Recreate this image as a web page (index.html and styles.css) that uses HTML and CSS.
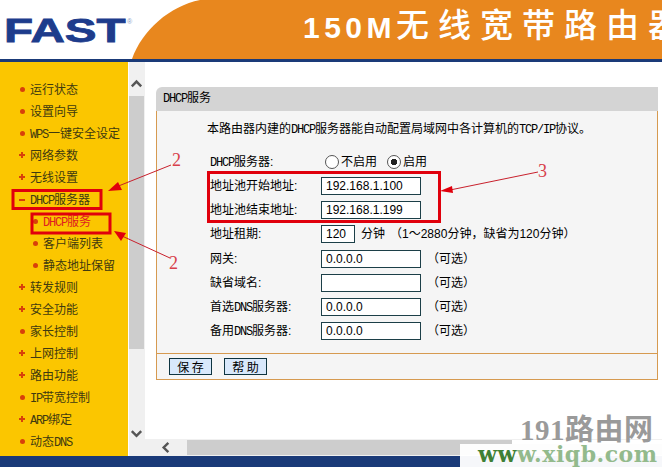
FILE: index.html
```html
<!DOCTYPE html>
<html lang="zh">
<head>
<meta charset="utf-8">
<title>DHCP服务</title>
<link rel="stylesheet" href="styles.css">
</head>
<body>
<div class="app">
  <header class="header">
    <div class="logo"><span class="logo-word">FAST</span><span class="logo-reg">®</span></div>
    <svg class="banner-shape" viewBox="0 0 530 59" preserveAspectRatio="none" aria-hidden="true"><path d="M0 59C10 30 38 6 68 0H530V59Z" fill="#e8871e"/></svg>
    <div class="banner-title"><span class="banner-latin">150M</span>无线宽带路由器</div>
  </header>
  <div class="main">
    <nav class="sidebar">
      <div class="item dot">运行状态</div>
      <div class="item dot">设置向导</div>
      <div class="item dot"><span class="lat">WPS</span>一键安全设定</div>
      <div class="item plus">网络参数</div>
      <div class="item plus">无线设置</div>
      <div class="item minus"><span class="lat">DHCP</span>服务器</div>
      <div class="item dot sub active"><span class="lat">DHCP</span>服务</div>
      <div class="item dot sub">客户端列表</div>
      <div class="item dot sub">静态地址保留</div>
      <div class="item plus">转发规则</div>
      <div class="item plus">安全功能</div>
      <div class="item dot">家长控制</div>
      <div class="item plus">上网控制</div>
      <div class="item plus">路由功能</div>
      <div class="item dot"><span class="lat">IP</span>带宽控制</div>
      <div class="item plus"><span class="lat">ARP</span>绑定</div>
      <div class="item dot">动态<span class="lat">DNS</span></div>
    </nav>
    <div class="vscroll">
      <svg class="arrow-v" viewBox="0 0 16 14" aria-hidden="true"><path d="M3 10.500 8 5.500l5 5" fill="none" stroke="#555" stroke-width="2.600"/></svg>
      <div class="vthumb"></div>
      <svg class="arrow-v arrow-end" viewBox="0 0 16 14" aria-hidden="true"><path d="M3 4 8 9l5-5" fill="none" stroke="#555" stroke-width="2.600"/></svg>
    </div>
    <div class="content">
      <div class="page">
        <section class="panel">
          <h1 class="panel-title"><span class="lat">DHCP</span>服务</h1>
          <div class="panel-body">
            <p class="desc">本路由器内建的<span class="lat">DHCP</span>服务器能自动配置局域网中各计算机的<span class="lat">TCP/IP</span>协议。</p>
            <div class="row">
              <label class="label"><span class="lat">DHCP</span>服务器:</label>
              <input class="radio" type="radio" name="dhcp"><span class="radio-text">不启用</span>
              <input class="radio" type="radio" name="dhcp" checked><span>启用</span>
            </div>
            <div class="row">
              <label class="label">地址池开始地址:</label>
              <input class="field" type="text" value="192.168.1.100">
            </div>
            <div class="row">
              <label class="label">地址池结束地址:</label>
              <input class="field" type="text" value="192.168.1.199">
            </div>
            <div class="row">
              <label class="label">地址租期:</label>
              <input class="field short" type="text" value="120">
              <span class="unit">分钟</span><span class="note">（1～2880分钟，缺省为120分钟）</span>
            </div>
            <div class="row row-gap">
              <label class="label">网关:</label>
              <input class="field" type="text" value="0.0.0.0"><span class="opt">（可选）</span>
            </div>
            <div class="row">
              <label class="label">缺省域名:</label>
              <input class="field" type="text" value=""><span class="opt">（可选）</span>
            </div>
            <div class="row">
              <label class="label">首选<span class="lat">DNS</span>服务器:</label>
              <input class="field" type="text" value="0.0.0.0"><span class="opt">（可选）</span>
            </div>
            <div class="row">
              <label class="label">备用<span class="lat">DNS</span>服务器:</label>
              <input class="field" type="text" value="0.0.0.0"><span class="opt">（可选）</span>
            </div>
          </div>
          <div class="panel-foot">
            <button class="btn" type="button">保 存</button>
            <button class="btn" type="button">帮 助</button>
          </div>
        </section>
      </div>
      <div class="hscroll">
        <svg class="arrow-h" viewBox="0 0 14 16" aria-hidden="true"><path d="M9.500 3 4.500 8l5 5" fill="none" stroke="#555" stroke-width="2.600"/></svg>
        <div class="hthumb"></div>
      </div>
    </div>
  </div>
  <div class="footbar"></div>
</div>

<svg class="notes" viewBox="0 0 662 467" aria-hidden="true">
  <g fill="none" stroke="#e0000c" stroke-width="3">
    <rect x="13" y="190.500" width="88" height="18"/>
    <rect x="32" y="214" width="78" height="19"/>
    <rect x="208.500" y="172.500" width="231" height="49"/>
  </g>
  <g stroke="#c8202c" stroke-width="1" fill="none">
    <path d="M171 165 116 187"/>
    <path d="M170 258 122 236"/>
    <path d="M538 172 450 190"/>
  </g>
  <g fill="#e0000c">
    <path d="M108 191 118 182 122 190Z"/>
    <path d="M114 231 126 233 121 241Z"/>
    <path d="M440 191 452 186 453 193Z"/>
  </g>
  <g class="note-num">
    <text x="172" y="166">2</text>
    <text x="169" y="269">2</text>
    <text x="538" y="177">3</text>
  </g>
</svg>

<div class="wm-site">191路由网</div>
<div class="wm-url"><span class="wm-dark">ww</span>w.xiqb.com</div>
</body>
</html>
```
FILE: styles.css
```css
* { box-sizing: border-box; }

html, body {
  margin: 0;
  padding: 0;
  overflow: hidden;
}

body {
  position: relative;
  width: 662px;
  height: 467px;
  background: #fff;
  color: #000;
  font: 12px/1 "Liberation Sans", "Noto Sans CJK SC", sans-serif;
}

.lat {
  font-family: "Liberation Mono", monospace;
  font-size: 12px;
  letter-spacing: -1.200px;
}

.app {
  display: flex;
  flex-direction: column;
  height: 467px;
}

/* header */
.header {
  position: relative;
  flex: none;
  height: 62px;
  display: flex;
  align-items: flex-start;
  border-bottom: 3px solid #1a3a78;
  overflow: hidden;
}

.logo {
  flex: none;
  width: 133px;
  padding: 14px 0 0 4px;
  display: flex;
  align-items: flex-start;
  color: #1d3c8c;
}

.logo-word {
  display: inline-block;
  width: 123px;
  font: 900 34px/33px "Liberation Sans", sans-serif;
  transform: scaleX(1.4);
  transform-origin: left top;
  -webkit-text-stroke: 0.800px #1d3c8c;
}

.logo-reg {
  font-size: 7px;
  margin-top: 4px;
  color: #8a9cc4;
}

.banner-shape {
  position: absolute;
  left: 132px;
  top: 0;
  width: 530px;
  height: 59px;
}

.banner-title {
  position: absolute;
  left: 303px;
  top: 7px;
  white-space: nowrap;
  color: #fff;
  font: 500 33px/33px "Noto Sans CJK SC", sans-serif;
  letter-spacing: 9px;
}

.banner-latin {
  position: relative;
  top: 1px;
  font: 700 30px/33px "Liberation Sans", sans-serif;
  letter-spacing: 4.500px;
}

/* body */
.main {
  flex: 1;
  min-height: 0;
  display: flex;
}

.sidebar {
  flex: none;
  width: 128px;
  padding-top: 17px;
  background: #fbc600;
  overflow: hidden;
}

.item {
  position: relative;
  height: 22px;
  padding-left: 30px;
  line-height: 22px;
  white-space: nowrap;
  color: #3f3a10;
}

.item::before {
  content: "";
  position: absolute;
  left: 20px;
  top: 8px;
  width: 5px;
  height: 5px;
  background: #d8400a;
}

.dot::before {
  border-radius: 50%;
}

.plus::before {
  left: 19px;
  top: 7px;
  width: 6px;
  height: 6px;
  background:
    linear-gradient(#d8400a, #d8400a) center / 6px 2px no-repeat,
    linear-gradient(#d8400a, #d8400a) center / 2px 6px no-repeat;
}

.minus::before {
  left: 19px;
  top: 10px;
  width: 6px;
  height: 2px;
}

.sub {
  padding-left: 43px;
}

.sub::before {
  left: 33px;
}

.active {
  color: #e02020;
}

.vscroll {
  flex: none;
  width: 16px;
  margin-left: 1px;
  padding-right: 1px;
  display: flex;
  flex-direction: column;
  background: #f0f0f0;
}

.arrow-v {
  flex: none;
  display: block;
  width: 15px;
  height: 14px;
  margin-top: 14px;
}

.vthumb {
  flex: none;
  height: 253px;
  margin-top: 6px;
  background: #cdcdcd;
}

.arrow-end {
  margin-top: auto;
  margin-bottom: 15px;
}

.content {
  flex: 1;
  min-width: 0;
  display: flex;
  flex-direction: column;
}

.page {
  flex: 1;
  min-height: 0;
  padding: 25px 4px 0 11px;
}

.panel-title {
  height: 24px;
  margin: 0;
  padding-left: 7px;
  background: #d4d4d4;
  border-radius: 6px 0 0 0;
  font-size: 12px;
  font-weight: 400;
  line-height: 22px;
}

.panel-body {
  height: 242px;
  padding-left: 53px;
  background: #f5f5f5;
  border-left: 1px solid #d69a50;
  border-right: 1px solid #d69a50;
}

.desc {
  height: 36px;
  margin: 0 0 3px -3px;
  line-height: 36px;
  white-space: nowrap;
}

.row {
  display: flex;
  align-items: center;
  height: 24px;
  white-space: nowrap;
}

.row-gap {
  margin-top: 1px;
}

.label {
  flex: none;
  width: 111px;
}

.field {
  flex: none;
  width: 100px;
  height: 18px;
  margin: 0;
  padding: 0 4px;
  border: 1px solid #1c3f48;
  border-radius: 0;
  outline: none;
  background: #fff;
  color: #000;
  font: 12px "Liberation Sans", sans-serif;
}

.short {
  width: 34px;
}

.unit {
  margin-left: 6px;
}

.note {
  margin-left: 5px;
}

.opt {
  margin-left: 6px;
}

.radio {
  flex: none;
  appearance: none;
  width: 14px;
  height: 14px;
  margin: 0 2px 0 4px;
  border: 1px solid #555;
  border-radius: 50%;
  background: #fff;
}

.radio:checked {
  background: radial-gradient(circle, #222 0 3px, #fff 3.500px);
}

.radio-text {
  margin-right: 6px;
}

.panel-foot {
  display: flex;
  gap: 12px;
  height: 27px;
  padding: 4px 0 0 12px;
  background: #f5f5f5;
  border: 1px solid #d69a50;
}

.btn {
  width: 43px;
  height: 17px;
  margin: 0;
  padding: 0;
  border: 1px solid #0e3440;
  border-radius: 0;
  background: #d8e8fb;
  color: #000;
  font: 12px/15px "Noto Sans CJK SC", sans-serif;
}

.hscroll {
  flex: none;
  height: 17px;
  padding: 1px 0;
  display: flex;
  align-items: stretch;
  background: #f0f0f0;
}

.arrow-h {
  flex: none;
  width: 14px;
  height: 15px;
  margin-left: 14px;
}

.hthumb {
  flex: 1;
  margin-left: 14px;
  background: #cdcdcd;
}

.footbar {
  flex: none;
  height: 11px;
  background: #1a3a78;
}

/* annotations drawn over the screenshot */
.notes {
  position: absolute;
  left: 0;
  top: 0;
  width: 662px;
  height: 467px;
  pointer-events: none;
}

.note-num {
  fill: #d8404a;
  font: 18px "Liberation Serif", serif;
}

/* watermark */
.wm-url {
  position: absolute;
  left: 460px;
  top: 444px;
  width: 202px;
  height: 23px;
  padding-left: 18px;
  background: rgba(255, 255, 255, 0.960);
  color: #93ba8c;
  font: 700 22px/20px "DejaVu Serif", serif;
  letter-spacing: 0.500px;
  white-space: nowrap;
}

.wm-dark {
  color: #3f8035;
}

.wm-site {
  position: absolute;
  left: 512px;
  top: 414px;
  width: 150px;
  height: 30px;
  padding-left: 8px;
  background: linear-gradient(transparent 26px, #fff 26px);
  color: #9a9a9a;
  font: 700 29px/32px "Liberation Serif", "Noto Sans CJK SC", serif;
  letter-spacing: 0.500px;
  white-space: nowrap;
}
```
